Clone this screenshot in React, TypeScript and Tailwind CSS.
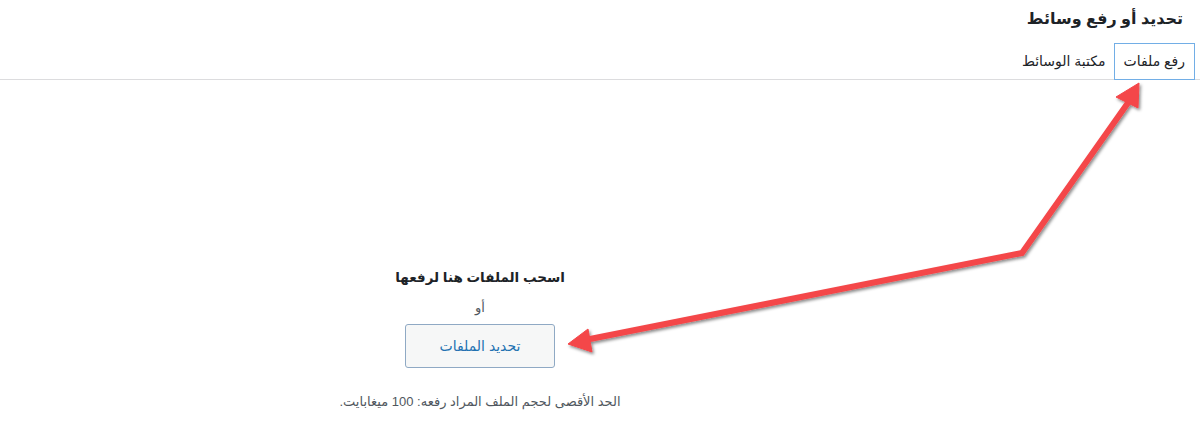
const Arrows = () => (
  <svg className="pointer-events-none absolute inset-0" width="1200" height="437" viewBox="0 0 1200 437">
    <defs>
      <filter id="shadow" x="-10%" y="-10%" width="120%" height="120%">
        <feDropShadow dx="1.5" dy="2" stdDeviation="1.5" floodColor="#000" floodOpacity="0.45" />
      </filter>
    </defs>
    <g filter="url(#shadow)" fill="#f44649" stroke="#f44649">
      <polyline points="1130,100 1022,253 585,340" fill="none" strokeWidth="6" strokeLinejoin="miter" />
      <polygon points="1139,83 1116,97 1138,108" strokeWidth="1" />
      <polygon points="568,344 588,329 592,352" strokeWidth="1" />
    </g>
  </svg>
);

export default function App() {
  return (
    <div
      dir="rtl"
      className="relative h-[437px] w-full overflow-hidden bg-white text-[#1d2327]"
      style={{ fontFamily: '"Liberation Sans", "DejaVu Sans", sans-serif' }}
    >
      <h1 className="px-[17px] pt-[8px] text-[16px] font-bold leading-[22px]">تحديد أو رفع وسائط</h1>

      <div className="mt-[13px] flex h-[37px] items-stretch border-b border-[#dcdcde] pr-[5px]">
        <button
          type="button"
          className="-mb-px border border-[#72aee6] bg-white px-[9px] text-[14px] text-[#1d2327]"
        >
          رفع ملفات
        </button>
        <button type="button" className="px-[8px] pt-px text-[14px] text-[#1d2327]">
          مكتبة الوسائط
        </button>
      </div>

      <div className="flex">
        <aside className="w-[240px] shrink-0" />
        <main className="flex flex-1 flex-col items-center pt-[188px]">
          <h2 className="text-[13.5px] font-bold leading-[20px]">اسحب الملفات هنا لرفعها</h2>
          <p className="mt-[12px] text-[13px] leading-[16px] text-[#50575e]">أو</p>
          <button
            type="button"
            className="mt-[8px] h-[44px] w-[150px] rounded-[3px] border border-[#8fa9c4] bg-[#f6f7f7] text-[14px] text-[#2271b1]"
          >
            تحديد الملفات
          </button>
          <p className="mt-[26px] text-[13px] leading-[16px] text-[#50575e]">
            الحد الأقصى لحجم الملف المراد رفعه: 100 ميغابايت.
          </p>
        </main>
      </div>

      <Arrows />
    </div>
  );
}
